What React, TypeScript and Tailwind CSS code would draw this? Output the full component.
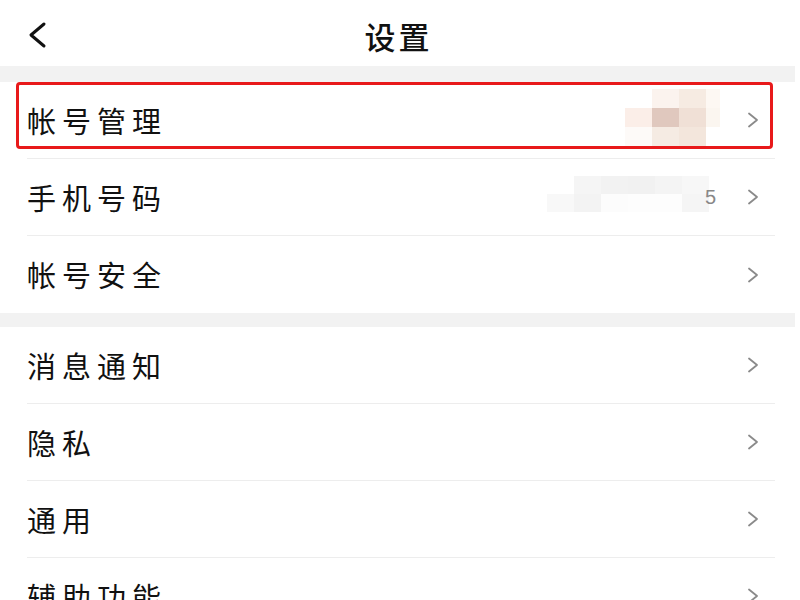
import React from "react";

const font = { fontFamily: '"Noto Sans CJK SC", "Noto Sans", sans-serif' };

function Chevron() {
  return (
    <svg width="14" height="18" viewBox="0 0 14 18" className="shrink-0">
      <path d="M3 2.5 L11 9 L3 15.5" fill="none" stroke="#8a8a8a" strokeWidth="1.8" strokeLinecap="round" strokeLinejoin="round" />
    </svg>
  );
}

function Mosaic1() {
  const c = [
    ["#ffffff", "#fbf3ee", "#f6ebe2", "#fdf8f3"],
    ["#fbeee8", "#e0c8be", "#f0e0d6", "#fbf6f0"],
    ["#fdfaf8", "#f5ebe3", "#f3e6dc", "#ffffff"],
  ];
  return (
    <div className="grid grid-cols-[27px_27px_27px_14px] grid-rows-[19px_19px_19px] mr-[26px] -mt-[6px]">
      {c.flat().map((col, i) => (
        <div key={i} style={{ background: col }} />
      ))}
    </div>
  );
}

function Mosaic2() {
  const c = [
    ["#ffffff", "#f5f5f5", "#f2f2f2", "#f1f1f1", "#f4f4f4", "#f7f7f7"],
    ["#f8f8f8", "#f3f3f3", "#fcfcfc", "#fdfdfd", "#fdfdfd", "#f5f5f5"],
  ];
  return (
    <div className="grid grid-cols-[27px_27px_27px_27px_27px_27px] grid-rows-[18px_18px] -mt-[6px]">
      {c.flat().map((col, i) => (
        <div key={i} style={{ background: col }} />
      ))}
    </div>
  );
}

function Row({ label, right, last, boxed }: { label: string; right?: React.ReactNode; last?: boolean; boxed?: boolean }) {
  return (
    <div className="relative h-[77px] bg-white">
      <div className={`ml-[27px] mr-[20px] h-full flex items-center pr-[15px] ${last ? "" : "border-b border-[#ededed]"}`}>
        <span className="text-[29px] tracking-[6px] text-[#111] leading-none" style={font}>{label}</span>
        <div className="flex-1" />
        {right}
        <Chevron />
      </div>
      {boxed && (
        <div className="absolute left-[16px] top-0 w-[757px] h-[67px] border-[3px] border-[#e8191a] rounded-[4px]" />
      )}
    </div>
  );
}

export default function App() {
  return (
    <div className="w-[800px] h-[600px] overflow-hidden bg-white" style={font}>
      <div className="w-[795px]">
        <div className="h-[66px] flex items-center relative bg-white">
          <svg width="22" height="28" viewBox="0 0 22 28" className="ml-[26px] mt-[4px]">
            <path d="M18 3 L5 14 L18 25" fill="none" stroke="#111" strokeWidth="3" strokeLinecap="round" strokeLinejoin="round" />
          </svg>
          <div className="absolute left-0 right-0 pl-[2px] text-center text-[31px] font-medium tracking-[3px] text-[#111] mt-[6px]">设置</div>
        </div>
        <div className="h-[16px] bg-[#f2f2f2]" />
        <Row label="帐号管理" boxed right={<Mosaic1 />} />
        <Row
          label="手机号码"
          right={
            <div className="flex items-center mr-[30px]">
              <Mosaic2 />
              <span className="text-[20px] text-[#888] ml-[-4px]" style={{ fontFamily: '"Liberation Sans", sans-serif' }}>5</span>
            </div>
          }
        />
        <Row label="帐号安全" last />
        <div className="h-[14px] bg-[#f2f2f2]" />
        <Row label="消息通知" />
        <Row label="隐私" />
        <Row label="通用" />
        <Row label="辅助功能" />
      </div>
    </div>
  );
}
